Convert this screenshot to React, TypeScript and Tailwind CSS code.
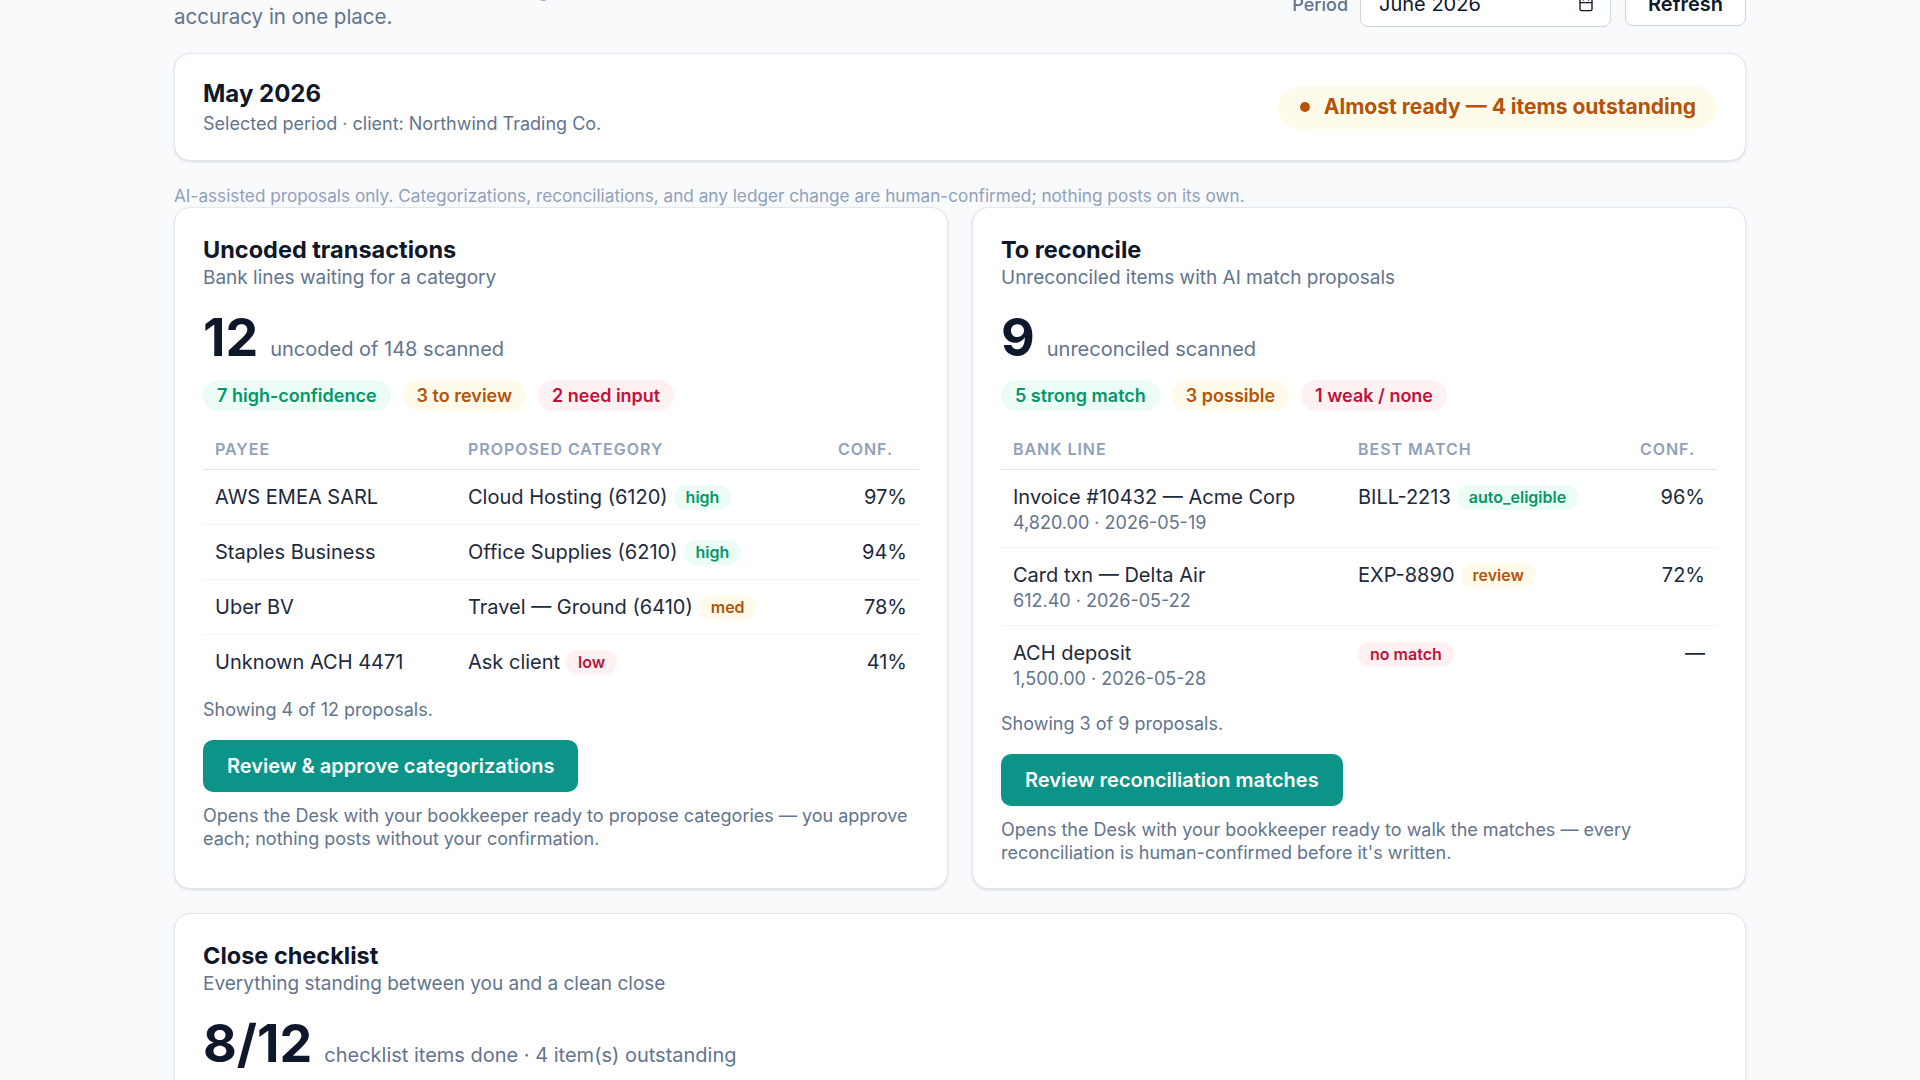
import { Calendar } from "lucide-react";

type Tone = "green" | "amber" | "red";

const pillTone: Record<Tone, string> = {
  green: "bg-[#ecfdf5] text-[#059669]",
  amber: "bg-[#fffbeb] text-[#b45309]",
  red: "bg-[#fff1f2] text-[#be123c]",
};

function Pill({ tone, children }: { tone: Tone; children: React.ReactNode }) {
  return (
    <span className={`inline-flex h-[31px] items-center rounded-full px-[14px] text-[18px] font-semibold ${pillTone[tone]}`}>
      {children}
    </span>
  );
}

function Tag({ tone, children }: { tone: Tone; children: React.ReactNode }) {
  return (
    <span className={`inline-flex h-[25px] items-center rounded-full px-3 text-[16px] font-semibold ${pillTone[tone]}`}>
      {children}
    </span>
  );
}

function Card({ className = "", children }: { className?: string; children: React.ReactNode }) {
  return (
    <div className={`rounded-2xl border border-slate-200 bg-white shadow-sm ${className}`}>{children}</div>
  );
}

function CardHead({ title, sub }: { title: string; sub: string }) {
  return (
    <div>
      <h2 className="text-[23.5px] font-bold leading-7 text-slate-900">{title}</h2>
      <p className="text-[19px] leading-7 text-slate-500">{sub}</p>
    </div>
  );
}

function BigStat({ value, label }: { value: string; label: string }) {
  return (
    <div className="mt-5 flex items-baseline gap-3">
      <span className="text-[52px] font-bold leading-none text-slate-900">{value}</span>
      <span className="text-[20px] leading-[30px] text-slate-500">{label}</span>
    </div>
  );
}

const th = "px-3 py-2.5 text-left text-[16px] font-semibold uppercase leading-5 tracking-[0.06em] text-slate-400";
const cell = "px-3 text-[20px] leading-[27px] text-slate-800";

const uncoded = [
  { payee: "AWS EMEA SARL", cat: "Cloud Hosting (6120)", tag: "high", tone: "green" as Tone, conf: "97%" },
  { payee: "Staples Business", cat: "Office Supplies (6210)", tag: "high", tone: "green" as Tone, conf: "94%" },
  { payee: "Uber BV", cat: "Travel — Ground (6410)", tag: "med", tone: "amber" as Tone, conf: "78%" },
  { payee: "Unknown ACH 4471", cat: "Ask client", tag: "low", tone: "red" as Tone, conf: "41%" },
];

const recon = [
  { line: "Invoice #10432 — Acme Corp", meta: "4,820.00 · 2026-05-19", match: "BILL-2213", tag: "auto_eligible", tone: "green" as Tone, conf: "96%" },
  { line: "Card txn — Delta Air", meta: "612.40 · 2026-05-22", match: "EXP-8890", tag: "review", tone: "amber" as Tone, conf: "72%" },
  { line: "ACH deposit", meta: "1,500.00 · 2026-05-28", match: "", tag: "no match", tone: "red" as Tone, conf: "—" },
];

function CardFoot({ showing, action, note }: { showing: string; action: string; note: string }) {
  return (
    <>
      <p className="mt-[9px] text-[18px] leading-6 text-slate-500">{showing}</p>
      <button className="mt-[18px] h-[52px] rounded-[10px] bg-[#0d9488] px-6 text-[20px] font-semibold text-white">
        {action}
      </button>
      <p className="mt-3 text-[18px] leading-[23px] text-slate-500">{note}</p>
    </>
  );
}

function UncodedCard() {
  return (
    <Card className="px-7 pb-6 pt-7">
      <CardHead title="Uncoded transactions" sub="Bank lines waiting for a category" />
      <BigStat value="12" label="uncoded of 148 scanned" />
      <div className="mt-4 flex gap-3">
        <Pill tone="green">7 high-confidence</Pill>
        <Pill tone="amber">3 to review</Pill>
        <Pill tone="red">2 need input</Pill>
      </div>
      <table className="mt-[18px] w-full border-collapse">
        <thead>
          <tr className="border-b border-slate-200">
            <th className={`${th} w-[253px]`}>Payee</th>
            <th className={th}>Proposed category</th>
            <th className={`${th} w-[93px]`}>Conf.</th>
          </tr>
        </thead>
        <tbody>
          {uncoded.map((r, i) => (
            <tr key={r.payee} className={i > 0 ? "border-t border-slate-100" : ""}>
              <td className={`${cell} pb-[13px] pt-[14px]`}>{r.payee}</td>
              <td className={`${cell} pb-[13px] pt-[14px]`}>
                <span className="inline-flex items-center gap-1.5">
                  {r.cat}
                  <Tag tone={r.tone}>{r.tag}</Tag>
                </span>
              </td>
              <td className={`${cell} pb-[13px] pt-[14px] text-right`}>{r.conf}</td>
            </tr>
          ))}
        </tbody>
      </table>
      <CardFoot
        showing="Showing 4 of 12 proposals."
        action="Review & approve categorizations"
        note="Opens the Desk with your bookkeeper ready to propose categories — you approve each; nothing posts without your confirmation."
      />
    </Card>
  );
}

function ReconcileCard() {
  return (
    <Card className="px-7 pb-6 pt-7">
      <CardHead title="To reconcile" sub="Unreconciled items with AI match proposals" />
      <BigStat value="9" label="unreconciled scanned" />
      <div className="mt-4 flex gap-3">
        <Pill tone="green">5 strong match</Pill>
        <Pill tone="amber">3 possible</Pill>
        <Pill tone="red">1 weak / none</Pill>
      </div>
      <table className="mt-[18px] w-full border-collapse">
        <thead>
          <tr className="border-b border-slate-200">
            <th className={`${th} w-[345px]`}>Bank line</th>
            <th className={th}>Best match</th>
            <th className={`${th} w-[89px]`}>Conf.</th>
          </tr>
        </thead>
        <tbody>
          {recon.map((r, i) => (
            <tr key={r.line} className={i > 0 ? "border-t border-slate-100" : ""}>
              <td className="px-3 pb-3 pt-[14px] align-top">
                <div className="text-[20px] leading-[27px] text-slate-800">{r.line}</div>
                <div className="text-[18px] leading-6 text-slate-500">{r.meta}</div>
              </td>
              <td className={`${cell} pb-3 pt-[14px] align-top`}>
                <span className="inline-flex items-center gap-1.5">
                  {r.match}
                  <Tag tone={r.tone}>{r.tag}</Tag>
                </span>
              </td>
              <td className={`${cell} pb-3 pt-[14px] text-right align-top`}>{r.conf}</td>
            </tr>
          ))}
        </tbody>
      </table>
      <CardFoot
        showing="Showing 3 of 9 proposals."
        action="Review reconciliation matches"
        note="Opens the Desk with your bookkeeper ready to walk the matches — every reconciliation is human-confirmed before it's written."
      />
    </Card>
  );
}

export default function App() {
  return (
    <div className="min-h-screen overflow-hidden bg-[#f8fafc] font-['Inter',sans-serif] text-slate-900">
      <div className="mx-auto w-[1572px] -mt-[65px] pb-10">
        {/* Header (page is scrolled a little) */}
        <div className="flex items-end justify-between">
          <div>
            <h1 className="text-[30px] font-bold leading-9">Month-end close</h1>
            <p className="mt-1 text-[20.5px] leading-7 text-slate-500">
              Review uncoded transactions, pending reconciliations, and checklist
              <br />
              accuracy in one place.
            </p>
          </div>
          <div className="mb-1 flex items-center">
            <span className="mr-3 text-[18px] font-medium text-slate-500">Period</span>
            <div className="flex h-[46px] w-[251px] items-center justify-between rounded-lg border border-slate-300 bg-white pl-[18px] pr-4 text-[20px] text-slate-900">
              <span>June 2026</span>
              <Calendar className="h-4 w-4" strokeWidth={2} />
            </div>
            <button className="ml-[14px] h-11 rounded-lg border border-slate-300 bg-white px-[22px] text-[20px] font-semibold text-slate-900">
              Refresh
            </button>
          </div>
        </div>

        {/* Period status */}
        <Card className="mt-[22px] flex items-center justify-between px-7 py-6">
          <div>
            <div className="text-[24px] font-bold leading-8">May 2026</div>
            <div className="mt-0.5 text-[18px] leading-6 text-slate-500">Selected period · client: Northwind Trading Co.</div>
          </div>
          <div className="inline-flex h-[43px] items-center gap-3.5 rounded-full bg-[#fffbeb] pl-[22px] pr-[21px] text-[21px] font-bold text-[#b45309]">
            <span className="h-2.5 w-2.5 rounded-full bg-[#b45309]" />
            Almost ready — 4 items outstanding
          </div>
        </Card>

        <p className="mt-6 text-[17.2px] leading-[22px] text-slate-400">
          AI-assisted proposals only. Categorizations, reconciliations, and any ledger change are human-confirmed;
          nothing posts on its own.
        </p>

        <div className="grid grid-cols-2 gap-6">
          <UncodedCard />
          <ReconcileCard />
        </div>

        <Card className="mt-6 p-7">
          <CardHead title="Close checklist" sub="Everything standing between you and a clean close" />
          <BigStat value="8/12" label="checklist items done · 4 item(s) outstanding" />
          <div className="h-64" />
        </Card>
      </div>
    </div>
  );
}
